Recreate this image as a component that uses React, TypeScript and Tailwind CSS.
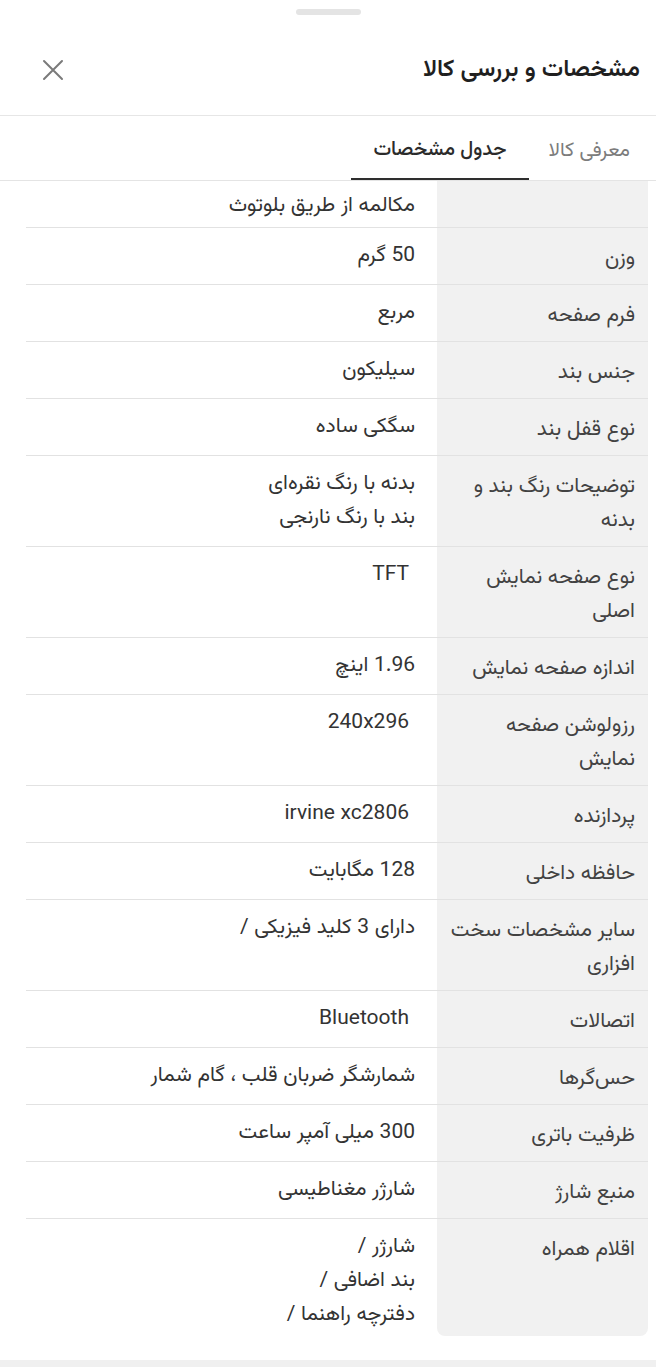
import { FC } from 'react';

type Spec = {
  label: string[];
  value: string[];
  ltr?: boolean;
  clipped?: boolean;
};

const specs: Spec[] = [
  { label: ['امکانات'], value: ['مکالمه از طریق بلوتوث'], clipped: true },
  { label: ['وزن'], value: ['50 گرم'] },
  { label: ['فرم صفحه'], value: ['مربع'] },
  { label: ['جنس بند'], value: ['سیلیکون'] },
  { label: ['نوع قفل بند'], value: ['سگکی ساده'] },
  {
    label: ['توضیحات رنگ بند و', 'بدنه'],
    value: ['بدنه با رنگ نقره‌ای', 'بند با رنگ نارنجی'],
  },
  { label: ['نوع صفحه نمایش', 'اصلی'], value: ['TFT'], ltr: true },
  { label: ['اندازه صفحه نمایش'], value: ['1.96 اینچ'] },
  { label: ['رزولوشن صفحه', 'نمایش'], value: ['240x296'], ltr: true },
  { label: ['پردازنده'], value: ['irvine xc2806'], ltr: true },
  { label: ['حافظه داخلی'], value: ['128 مگابایت'] },
  {
    label: ['سایر مشخصات سخت', 'افزاری'],
    value: ['دارای 3 کلید فیزیکی /'],
  },
  { label: ['اتصالات'], value: ['Bluetooth'], ltr: true },
  { label: ['حس‌گرها'], value: ['شمارشگر ضربان قلب ، گام شمار'] },
  { label: ['ظرفیت باتری'], value: ['300 میلی آمپر ساعت'] },
  { label: ['منبع شارژ'], value: ['شارژر مغناطیسی'] },
  {
    label: ['اقلام همراه'],
    value: ['شارژر /', 'بند اضافی /', 'دفترچه راهنما /'],
  },
];

const CloseIcon: FC = () => (
  <svg
    width="22"
    height="22"
    viewBox="0 0 22 22"
    fill="none"
    stroke="#7a7a7a"
    strokeWidth="2"
    strokeLinecap="round"
  >
    <path d="M2 2 L20 20 M20 2 L2 20" />
  </svg>
);

const valueClass = (spec: Spec) => {
  if (spec.clipped) return 'flex-1 pt-[45px] pr-[22px] pb-[4px] text-[#333]';
  if (spec.ltr) return 'flex-1 pt-[11px] pr-[28px] pb-[4px] text-[#333]';
  return 'flex-1 pt-[11px] pr-[22px] pb-[4px] text-[#333]';
};

const SpecRow: FC<{ spec: Spec; last: boolean }> = ({ spec, last }) => (
  <div className={last ? 'flex' : 'flex border-b border-[#e2e2e2]'}>
    <div
      className={
        last
          ? 'w-[211px] shrink-0 rounded-b-lg bg-[#f1f1f1] pt-[14px] pr-[13px] pb-[8px] text-[#424242]'
          : 'w-[211px] shrink-0 bg-[#f1f1f1] pt-[14px] pr-[13px] pb-[8px] text-[#424242]'
      }
    >
      {spec.label.map((line) => (
        <div key={line}>{line}</div>
      ))}
    </div>
    <div className={valueClass(spec)}>
      {spec.value.map((line) => (
        <div key={line}>{line}</div>
      ))}
    </div>
  </div>
);

const App: FC = () => {
  return (
    <div
      dir="rtl"
      className="flex h-[1367px] w-[656px] flex-col overflow-hidden bg-white"
      style={{
        fontFamily:
          '"Vazirmatn", "Noto Sans Arabic", "DejaVu Sans", sans-serif',
      }}
    >
      <div className="h-[30px] pt-[9px]">
        <div className="mx-auto h-[6px] w-[65px] rounded-full bg-[#e4e4e4]" />
      </div>
      <div className="flex h-[80px] items-center justify-between pr-[16px] pl-[42px]">
        <h1 className="text-[24px] font-semibold text-[#1f1f1f]">
          مشخصات و بررسی کالا
        </h1>
        <button type="button" className="p-0">
          <CloseIcon />
        </button>
      </div>
      <div className="h-[6px] border-b border-[#e6e6e6]" />

      <div className="flex border-b border-[#e4e4e4] pr-[6px] text-[20px]">
        <button
          type="button"
          className="h-[64px] px-5 pt-[6px] text-[#7c7c7c]"
        >
          معرفی کالا
        </button>
        <button
          type="button"
          className="h-[64px] border-b-2 border-[#2e2e2e] px-[22px] pt-[6px] font-medium text-[#2b2b2b]"
        >
          جدول مشخصات
        </button>
      </div>

      <div className="min-h-0 flex-1 overflow-hidden">
        <div className="-mt-[37px] pr-[8px] pl-[26px] text-[21px] leading-[34px]">
          {specs.map((spec, i) => (
            <SpecRow
              key={spec.label.join(' ')}
              spec={spec}
              last={i === specs.length - 1}
            />
          ))}
        </div>
      </div>
      <div className="h-[7px] bg-[#f0f0f0]" />
    </div>
  );
};

export default App;
